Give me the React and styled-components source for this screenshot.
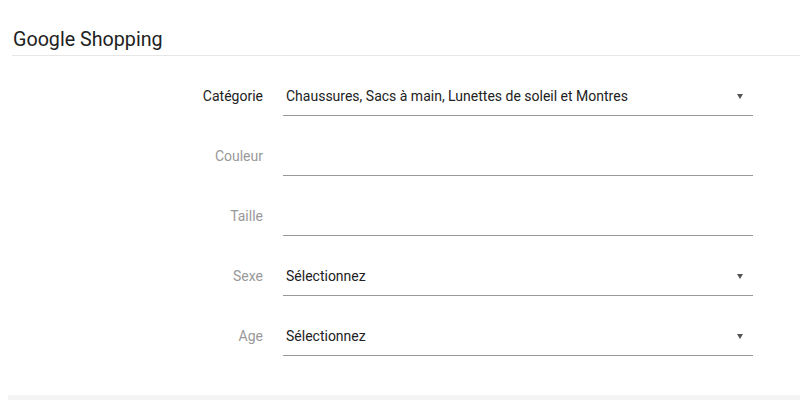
import React from 'react';
import styled, { createGlobalStyle } from 'styled-components';

const GlobalStyle = createGlobalStyle`
  body {
    margin: 0;
    background: #fff;
    font-family: Roboto, "Liberation Sans", sans-serif;
  }
`;

const fields = [
  { label: 'Catégorie', value: 'Chaussures, Sacs à main, Lunettes de soleil et Montres', select: true, strong: true },
  { label: 'Couleur', value: '' },
  { label: 'Taille', value: '' },
  { label: 'Sexe', value: 'Sélectionnez', select: true },
  { label: 'Age', value: 'Sélectionnez', select: true },
];

export default function App() {
  return (
    <>
      <GlobalStyle />
      <Page>
        <Header>
          <Title>Google Shopping</Title>
        </Header>
        <Form>
          {fields.map((f) => (
            <Row key={f.label}>
              <Label $strong={f.strong}>{f.label}</Label>
              <Field>
                <Value>{f.value}</Value>
                {f.select && (
                  <Arrow width="6" height="5" viewBox="0 0 6 5">
                    <path d="M0 0h6L3 5z" fill="#555" />
                  </Arrow>
                )}
              </Field>
            </Row>
          ))}
        </Form>
      </Page>
      <Footer />
    </>
  );
}

const Page = styled.div`
  padding-left: 12px;
`;

const Header = styled.div`
  padding: 28px 0 3px;
  border-bottom: 1px solid #e6e6e6;
`;

const Title = styled.h2`
  margin: 0 0 0 1px;
  font-size: 19.7px;
  line-height: 24px;
  font-weight: 400;
  color: #222;
`;

const Form = styled.div`
  display: flex;
  flex-direction: column;
  gap: 20px;
  margin-top: 20px;
`;

const Row = styled.div`
  display: flex;
  align-items: center;
  gap: 20px;
`;

const Label = styled.div`
  width: 251px;
  text-align: right;
  font-size: 14px;
  color: ${(p) => (p.$strong ? '#222' : '#999')};
`;

const Field = styled.div`
  width: 470px;
  height: 40px;
  box-sizing: border-box;
  border-bottom: 1px solid #999;
  display: flex;
  align-items: center;
  justify-content: space-between;
  padding: 1px 10px 0 3px;
`;

const Value = styled.span`
  font-size: 14px;
  color: #222;
`;

const Arrow = styled.svg`
  display: block;
`;

const Footer = styled.div`
  margin: 39px 0 0 8px;
  height: 10px;
  background: #f4f4f4;
`;
